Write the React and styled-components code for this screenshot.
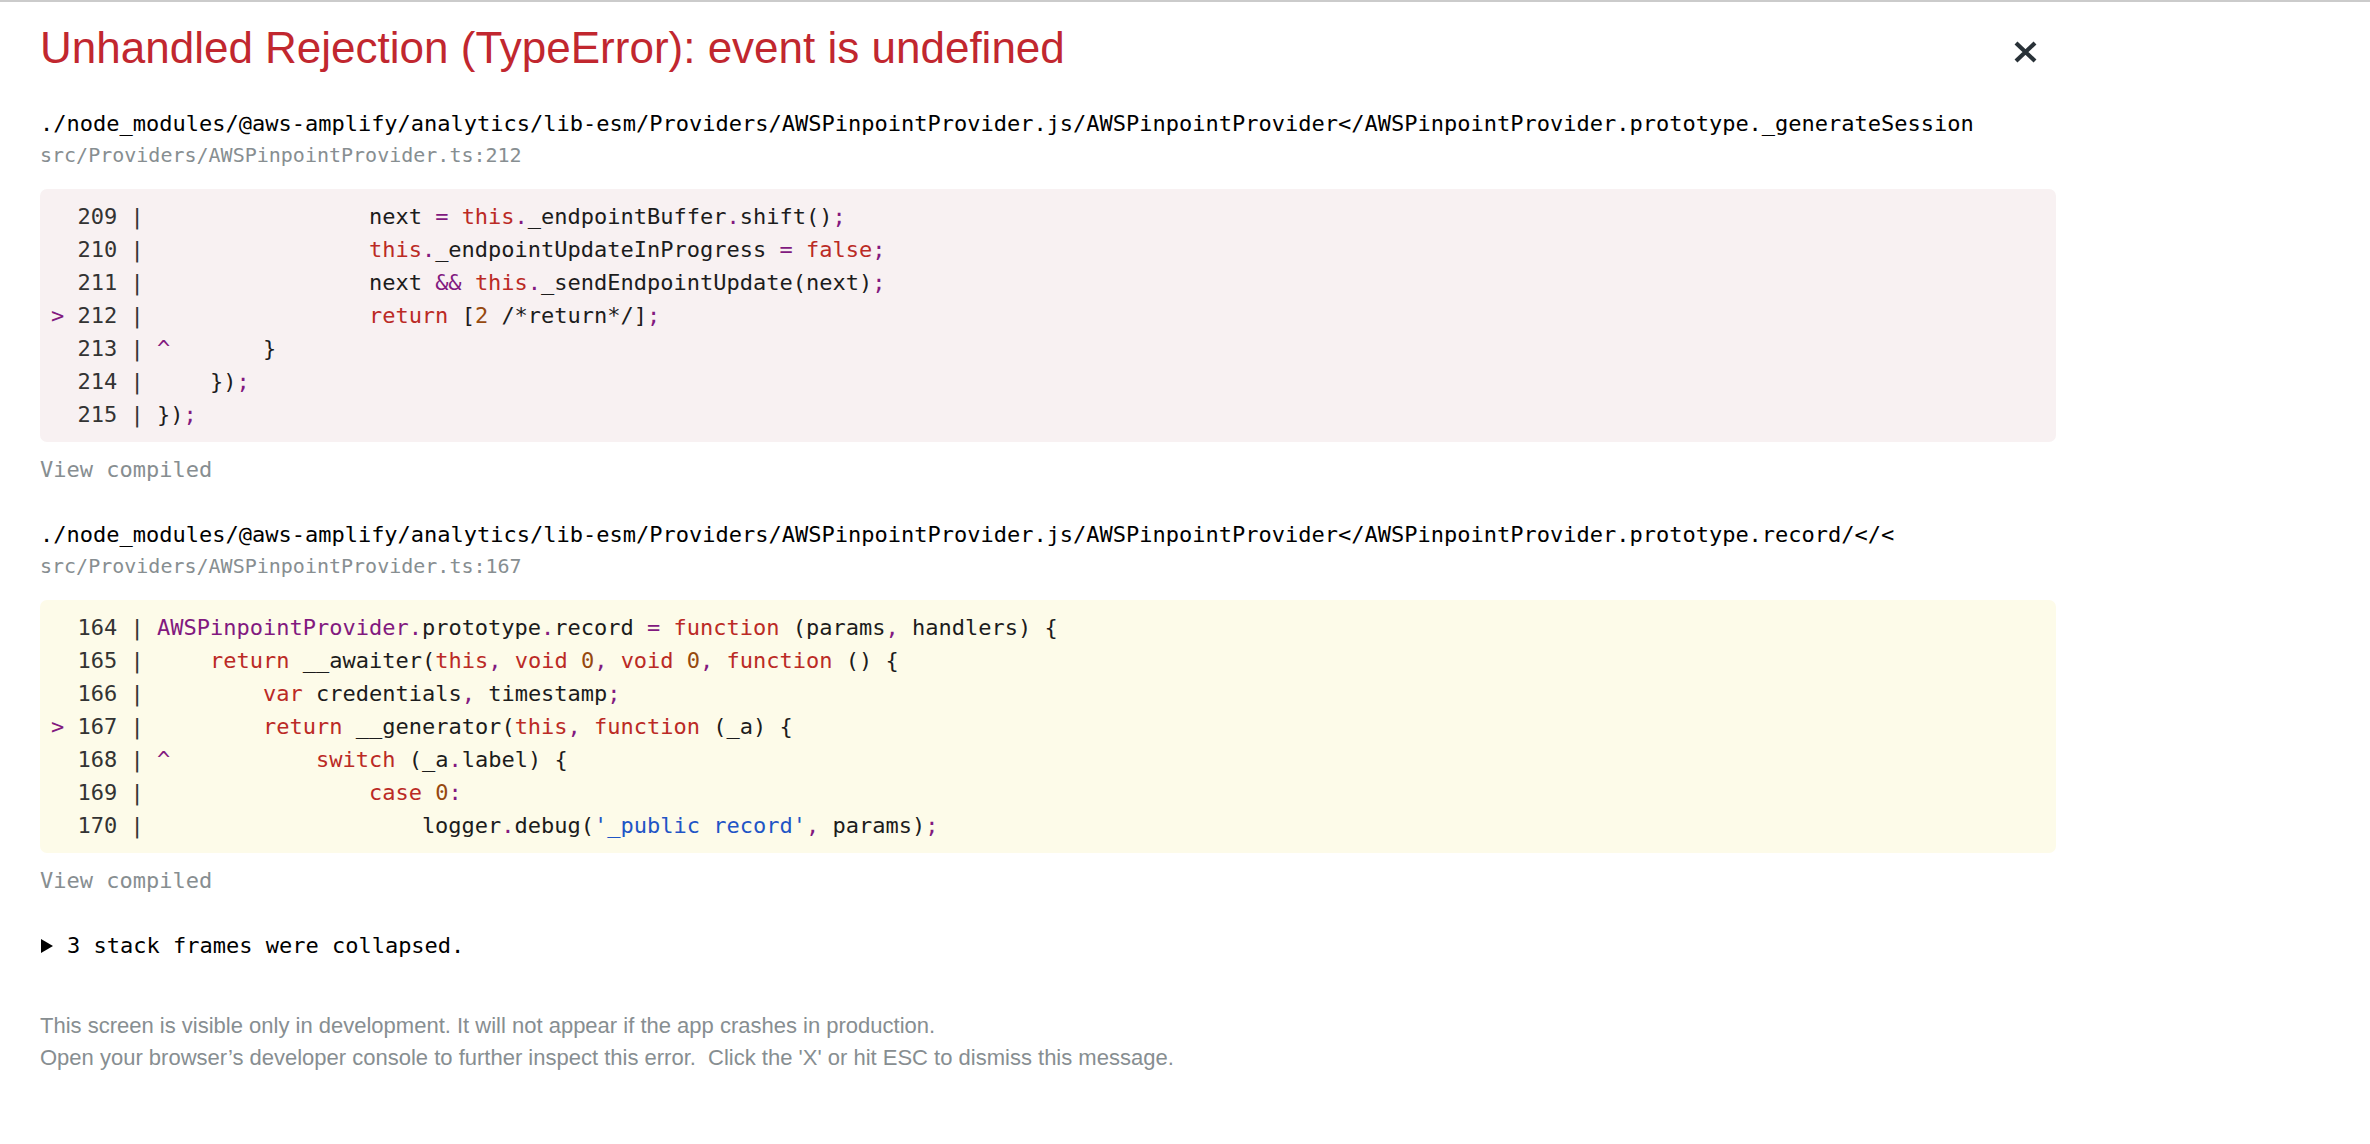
import styled, { createGlobalStyle } from "styled-components";

const GlobalStyle = createGlobalStyle`
  body {
    margin: 0;
    background: #ffffff;
  }
`;

const MONO = `"DejaVu Sans Mono", "Liberation Mono", monospace`;
const SANS = `"Liberation Sans", Arial, sans-serif`;

const colors = {
  plain: "#1c1c1c",
  gutter: "#333333",
  keyword: "#bb2a25",
  punct: "#82197f",
  number: "#96490f",
  string: "#1f55c6",
  comment: "#1c1c1c",
};

const Page = styled.div`
  border-top: 2px solid #cbcbcb;
`;

const Container = styled.div`
  width: 2016px;
  padding: 19px 0 40px 40px;
  font-family: ${MONO};
  font-size: 22px;
  line-height: 33px;
  color: #000;
  white-space: pre-wrap;
`;

const Header = styled.div`
  display: flex;
  justify-content: space-between;
  align-items: flex-start;
  margin-bottom: 33px;
`;

const Title = styled.h1`
  margin: 0;
  font-family: ${SANS};
  font-size: 44px;
  line-height: 53px;
  font-weight: 400;
  color: #c1272f;
`;

const Close = styled.span`
  display: block;
  width: 23px;
  height: 22px;
  margin: 20px 19px 0 0;
  line-height: 0;
  cursor: pointer;
`;

const Frame = styled.div`
  margin-bottom: 32px;
`;

const FunctionName = styled.div`
  white-space: pre;
  color: #000;
`;

const Location = styled.div`
  font-size: 20px;
  line-height: 30px;
  color: #878e91;
`;

const CodeBlock = styled.pre`
  margin: 19px 0 0;
  padding: 11px;
  border-radius: 7px;
  font-family: ${MONO};
  font-size: 22px;
  line-height: 33px;
  white-space: pre;
  background: ${(p) => (p.$tone === "primary" ? "#f8f1f2" : "#fdfbe9")};
`;

const CodeLine = styled.div`
  height: 33px;
`;

const Token = styled.span`
  color: ${(p) => colors[p.$kind]};
`;

const ViewCompiled = styled.div`
  margin-top: 11px;
  color: #878e91;
  cursor: pointer;
`;

const Collapsed = styled.div`
  display: flex;
  align-items: center;
  height: 33px;
  color: #000;
  cursor: pointer;
`;

const Arrow = styled.span`
  display: inline-block;
  width: 0;
  height: 0;
  margin: 0 14px 0 1px;
  border-style: solid;
  border-width: 7px 0 7px 12px;
  border-color: transparent transparent transparent #000;
`;

const Footer = styled.div`
  margin-top: 48px;
  font-family: ${SANS};
  font-size: 22px;
  line-height: 32px;
  color: #878e91;
`;

const KEYWORDS = new Set([
  "this",
  "return",
  "function",
  "var",
  "void",
  "switch",
  "case",
  "false",
]);
const PUNCT = new Set([".", ";", ",", "=", ":", "^", "&&"]);

function tokenize(code) {
  const parts = code.match(/\/\*.*?\*\/|'[^']*'|[A-Za-z_$][\w$]*|\d+|&&|\s+|./g) || [];
  return parts.map((t) => {
    if (t.startsWith("/*")) return [t, "comment"];
    if (t.startsWith("'")) return [t, "string"];
    if (KEYWORDS.has(t)) return [t, "keyword"];
    if (t === "AWSPinpointProvider") return [t, "punct"];
    if (/^\d+$/.test(t)) return [t, "number"];
    if (PUNCT.has(t)) return [t, "punct"];
    return [t, "plain"];
  });
}

const frames = [
  {
    name: "./node_modules/@aws-amplify/analytics/lib-esm/Providers/AWSPinpointProvider.js/AWSPinpointProvider</AWSPinpointProvider.prototype._generateSession",
    location: "src/Providers/AWSPinpointProvider.ts:212",
    tone: "primary",
    lines: [
      [209, "                next = this._endpointBuffer.shift();"],
      [210, "                this._endpointUpdateInProgress = false;"],
      [211, "                next && this._sendEndpointUpdate(next);"],
      [212, "                return [2 /*return*/];", true],
      [213, "^       }"],
      [214, "    });"],
      [215, "});"],
    ],
  },
  {
    name: "./node_modules/@aws-amplify/analytics/lib-esm/Providers/AWSPinpointProvider.js/AWSPinpointProvider</AWSPinpointProvider.prototype.record/</<",
    location: "src/Providers/AWSPinpointProvider.ts:167",
    tone: "secondary",
    lines: [
      [164, "AWSPinpointProvider.prototype.record = function (params, handlers) {"],
      [165, "    return __awaiter(this, void 0, void 0, function () {"],
      [166, "        var credentials, timestamp;"],
      [167, "        return __generator(this, function (_a) {", true],
      [168, "^           switch (_a.label) {"],
      [169, "                case 0:"],
      [170, "                    logger.debug('_public record', params);"],
    ],
  },
];

function CloseIcon() {
  return (
    <svg width="23" height="22" viewBox="0 0 23 22">
      <path
        d="M2 2 L21 20 M21 2 L2 20"
        stroke="#293238"
        strokeWidth="4.2"
        fill="none"
      />
    </svg>
  );
}

function StackFrame({ frame }) {
  return (
    <Frame>
      <FunctionName>{frame.name}</FunctionName>
      <Location>{frame.location}</Location>
      <CodeBlock $tone={frame.tone}>
        {frame.lines.map(([num, code, active]) => (
          <CodeLine key={num}>
            <Token $kind="punct">{active ? ">" : " "}</Token>
            <Token $kind="gutter">{` ${num} | `}</Token>
            {tokenize(code).map(([text, kind], i) => (
              <Token key={i} $kind={kind}>
                {text}
              </Token>
            ))}
          </CodeLine>
        ))}
      </CodeBlock>
      <ViewCompiled>View compiled</ViewCompiled>
    </Frame>
  );
}

function App() {
  return (
    <Page>
      <GlobalStyle />
      <Container>
        <Header>
          <Title>Unhandled Rejection (TypeError): event is undefined</Title>
          <Close>
            <CloseIcon />
          </Close>
        </Header>
        {frames.map((f) => (
          <StackFrame key={f.location} frame={f} />
        ))}
        <Collapsed>
          <Arrow />
          <span>3 stack frames were collapsed.</span>
        </Collapsed>
        <Footer>
          This screen is visible only in development. It will not appear if the
          app crashes in production.
          <br />
          {"Open your browser’s developer console to further inspect this error.  Click the 'X' or hit ESC to dismiss this message."}
        </Footer>
      </Container>
    </Page>
  );
}

export default App;
